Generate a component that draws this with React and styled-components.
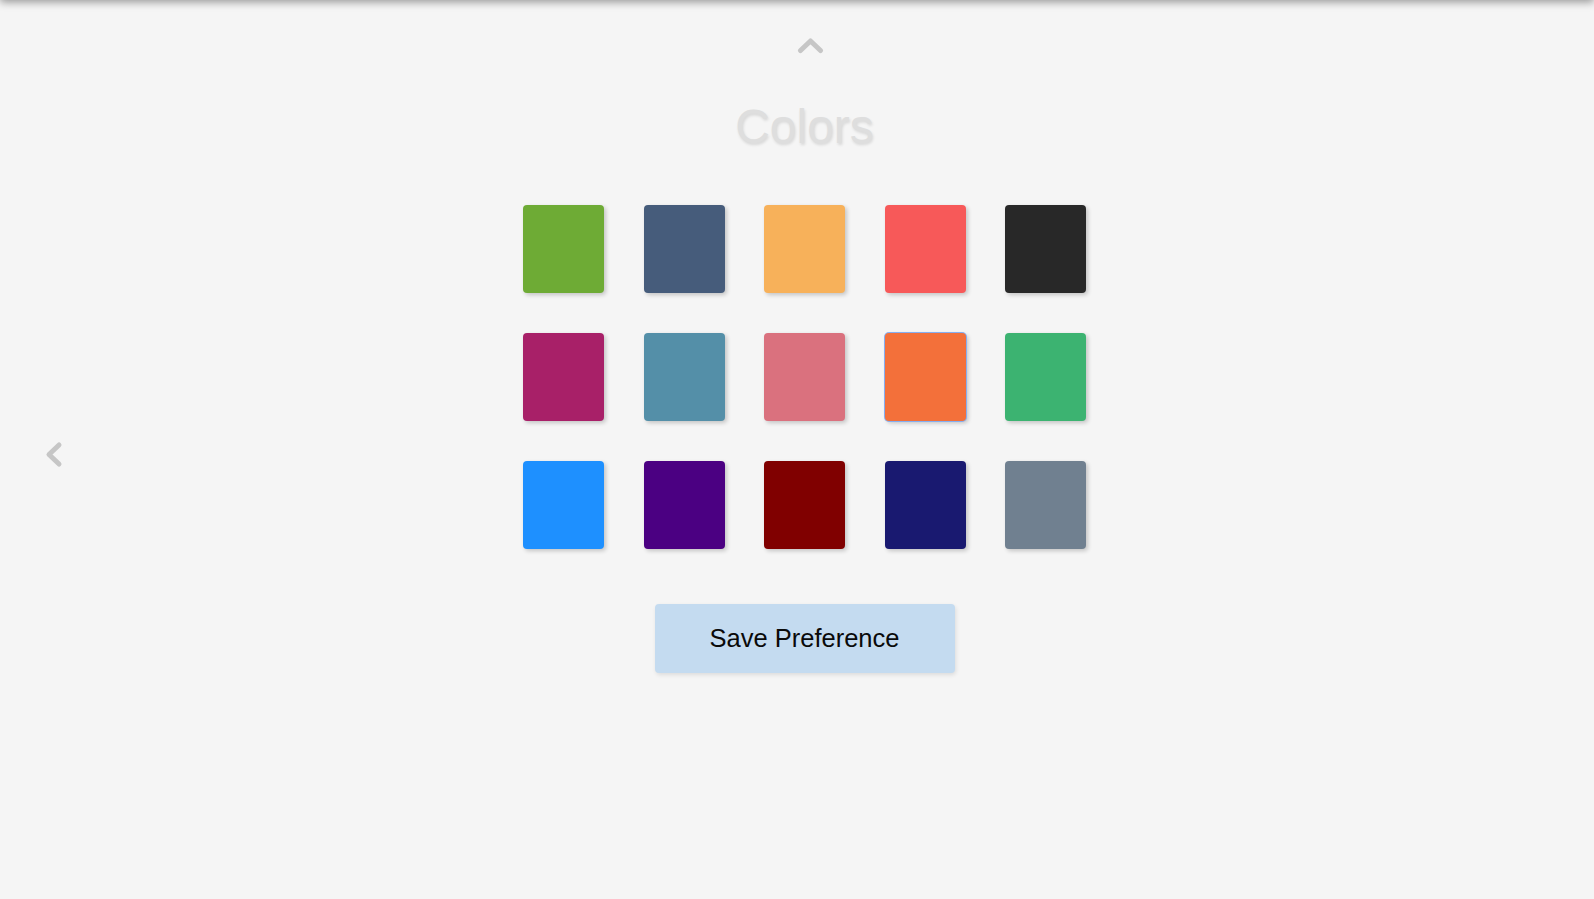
import React, { useState } from "react";
import styled, { createGlobalStyle } from "styled-components";

const GlobalStyle = createGlobalStyle`
  html, body {
    margin: 0;
    padding: 0;
    background: #f5f5f5;
    overflow: hidden;
  }
  body {
    font-family: "Liberation Sans", Arial, sans-serif;
  }
`;

const Page = styled.div`
  position: relative;
  min-height: 100vh;
  background: #f5f5f5;
  box-sizing: border-box;
`;

const TopShadow = styled.div`
  position: absolute;
  top: -12px;
  left: 0;
  right: 0;
  height: 12px;
  box-shadow: 0 2px 8px rgba(0, 0, 0, 0.4);
`;

const SideArrow = styled.button`
  position: absolute;
  left: 43px;
  top: 441px;
  padding: 0;
  border: none;
  background: transparent;
  display: flex;
  cursor: pointer;
`;

const Content = styled.main`
  display: flex;
  flex-direction: column;
  align-items: center;
  padding: 37px 0 0 15px;
`;

const UpArrow = styled.button`
  padding: 0;
  border: none;
  background: transparent;
  display: flex;
  margin-left: 11px;
  cursor: pointer;
`;

const Title = styled.h1`
  margin: 49px 0 0;
  font-family: "Liberation Sans", Arial, sans-serif;
  font-size: 48px;
  line-height: 48px;
  font-weight: 400;
  color: #dedede;
  text-shadow: 1px 2px 3px rgba(0, 0, 0, 0.12);
`;

const Grid = styled.div`
  display: grid;
  grid-template-columns: repeat(5, 81px);
  grid-auto-rows: 88px;
  column-gap: 39.5px;
  row-gap: 40px;
  margin-top: 54px;
`;

const Swatch = styled.button`
  padding: 0;
  border: none;
  border-radius: 4px;
  background: ${(p) => p.$color};
  box-shadow: ${(p) =>
    p.$selected
      ? "0 0 0 1px #86aef0, 2px 2px 4px rgba(0,0,0,0.22)"
      : "2px 2px 4px rgba(0,0,0,0.2)"};
  cursor: pointer;
`;

const SaveButton = styled.button`
  margin-top: 55px;
  width: 300px;
  height: 69px;
  border: none;
  border-radius: 4px;
  background: #c4dbf0;
  box-shadow: 1px 2px 4px rgba(0, 0, 0, 0.1);
  font-family: "Liberation Sans", Arial, sans-serif;
  font-size: 25.5px;
  color: #0a0a0a;
  cursor: pointer;
`;

const COLORS = [
  "#6eab35",
  "#465c7b",
  "#f7b15a",
  "#f75959",
  "#282828",
  "#a82068",
  "#548fa8",
  "#da717e",
  "#f3703a",
  "#3cb371",
  "#1e90ff",
  "#4b0082",
  "#800000",
  "#191970",
  "#708090",
];

export default function App() {
  const [selected, setSelected] = useState(8);
  return (
    <Page>
      <GlobalStyle />
      <TopShadow />
      <SideArrow aria-label="Previous">
        <svg width="22" height="27" viewBox="0 0 22 27">
          <polyline
            points="16,4 6,13.5 16,23"
            fill="none"
            stroke="#c6c6c6"
            strokeWidth="5"
            strokeLinecap="round"
            strokeLinejoin="round"
          />
        </svg>
      </SideArrow>
      <Content>
        <UpArrow aria-label="Up">
          <svg width="27" height="17" viewBox="0 0 27 17">
            <polyline
              points="3.5,13.5 13.5,4 23.5,13.5"
              fill="none"
              stroke="#c6c6c6"
              strokeWidth="5"
              strokeLinecap="round"
              strokeLinejoin="round"
            />
          </svg>
        </UpArrow>
        <Title>Colors</Title>
        <Grid>
          {COLORS.map((c, i) => (
            <Swatch
              key={c}
              $color={c}
              $selected={i === selected}
              onClick={() => setSelected(i)}
              aria-label={c}
            />
          ))}
        </Grid>
        <SaveButton>Save Preference</SaveButton>
      </Content>
    </Page>
  );
}
